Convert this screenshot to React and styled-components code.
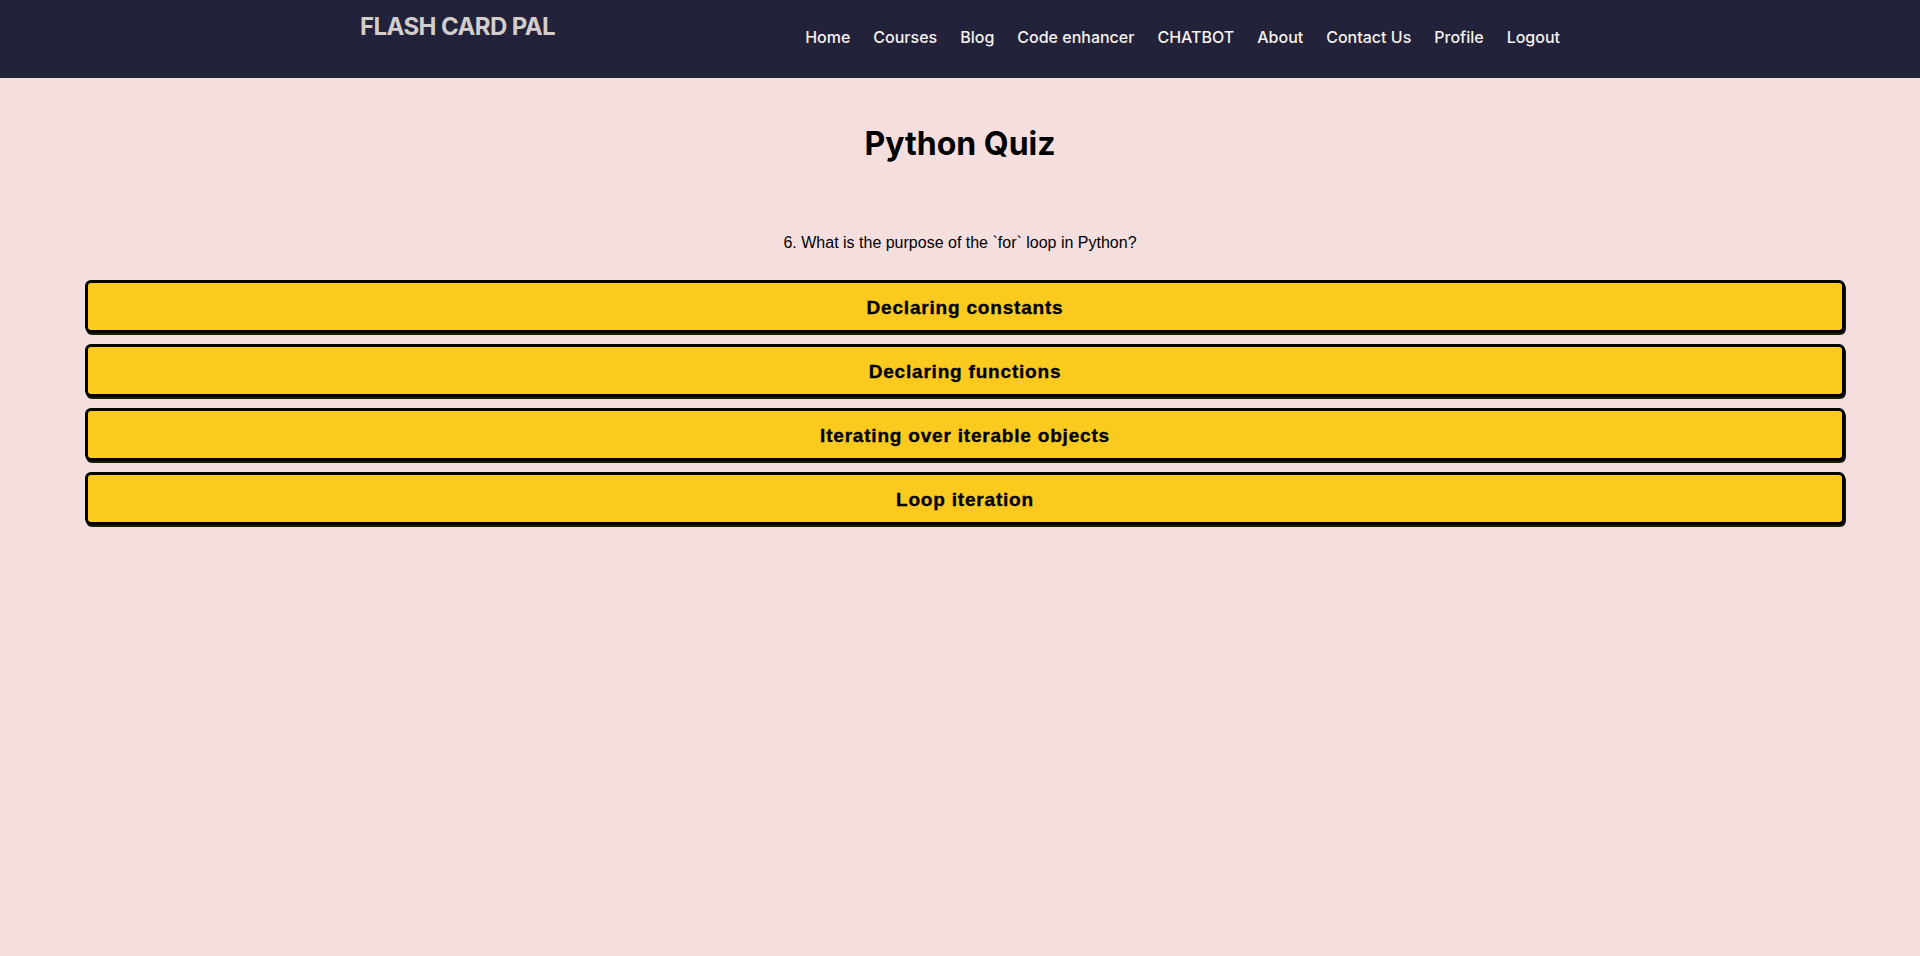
import React from "react";
import styled, {createGlobalStyle} from "styled-components";

const GlobalStyle = createGlobalStyle`
  html, body {
    margin: 0;
    padding: 0;
    background: #f4dfde;
  }
  body {
    font-family: "Liberation Sans", Arial, sans-serif;
    min-height: 956px;
  }
`

const Header = styled.header`
  height: 78px;
  background: #22223a;
  box-sizing: border-box;
  padding-top: 12px;
`

const HeaderInner = styled.div`
  max-width: 1200px;
  margin: 0 auto;
  display: flex;
  justify-content: space-between;
  align-items: flex-start;
`

const Logo = styled.div`
  font-family: Inter, "Noto Sans", sans-serif;
  font-weight: 700;
  font-size: 24px;
  line-height: 30px;
  color: #d3cdcc;
  letter-spacing: -0.6px;
`

const Nav = styled.nav`
  display: flex;
  gap: 23px;
  margin-top: 15px;
`

const NavLink = styled.a`
  font-family: Inter, "Noto Sans", sans-serif;
  font-weight: 500;
  font-size: 16px;
  line-height: 20px;
  color: #f5f2ec;
  text-decoration: none;
`

const Main = styled.main`
  display: flex;
  flex-direction: column;
`

const Title = styled.h1`
  margin: 46px 0 0;
  text-align: center;
  font-family: Inter, "Noto Sans", sans-serif;
  font-weight: 700;
  font-size: 32px;
  line-height: 40px;
  color: #000;
`

const Question = styled.p`
  margin: 69px 0 0;
  text-align: center;
  font-size: 16px;
  line-height: 20px;
  color: #000;
`

const Options = styled.div`
  display: flex;
  flex-direction: column;
  gap: 11px;
  margin: 27px 75px 0 85px;
`

const OptionButton = styled.button`
  height: 53px;
  box-sizing: border-box;
  padding: 3px 0 0;
  background: #fbca1f;
  border: 3px solid #000;
  border-radius: 6px;
  box-shadow: 1px 2px 0 #1b1b1b;
  font-family: "Liberation Sans", Arial, sans-serif;
  font-weight: 700;
  font-size: 19px;
  letter-spacing: 0.8px;
  -webkit-text-stroke: 0.35px #000;
  color: #000;
  cursor: pointer;
`

const links = ["Home", "Courses", "Blog", "Code enhancer", "CHATBOT", "About", "Contact Us", "Profile", "Logout"];

const answers = [
    "Declaring constants",
    "Declaring functions",
    "Iterating over iterable objects",
    "Loop iteration"
];

const App = () => {
    return (
        <>
            <GlobalStyle/>
            <Header>
                <HeaderInner>
                    <Logo>FLASH CARD PAL</Logo>
                    <Nav>
                        {links.map(l => <NavLink key={l} href="#">{l}</NavLink>)}
                    </Nav>
                </HeaderInner>
            </Header>
            <Main>
                <Title>Python Quiz</Title>
                <Question>6. What is the purpose of the `for` loop in Python?</Question>
                <Options>
                    {answers.map(a => <OptionButton key={a}>{a}</OptionButton>)}
                </Options>
            </Main>
        </>
    );
}

export default App;
